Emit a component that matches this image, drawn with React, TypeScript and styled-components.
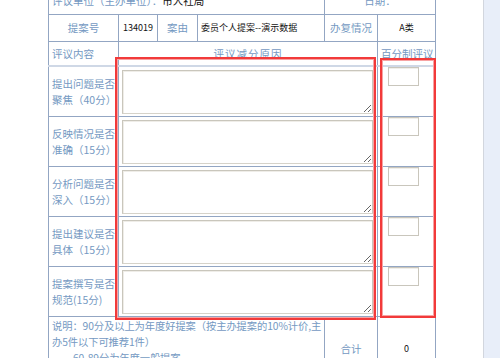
import React from 'react';
import styled, { createGlobalStyle } from 'styled-components';

const GlobalStyle = createGlobalStyle`
  html, body {
    margin: 0;
    padding: 0;
    background: #e8eef9;
  }
  body {
    font-family: "Noto Sans CJK SC", "Liberation Sans", sans-serif;
  }
`;

const Page = styled.div`
  position: relative;
  width: 483px;
  height: 358px;
  background: #ffffff;
  border-right: 1px solid #d2d6de;
  overflow: hidden;
`;

const Sheet = styled.table`
  margin: -13px 0 0 48px;
  width: 387px;
  table-layout: fixed;
  border-collapse: collapse;
  border-left: 1px solid #7088ab;
  border-right: 1px solid #7f95b6;
  font-size: 10.5px;
  color: #7499c2;
`;

type CellProps = {
  $align?: 'left' | 'center';
  $ink?: boolean;
  $h?: number;
  $rule?: boolean;
  $spread?: boolean;
};

const Cell = styled.td<CellProps>`
  border: 1px solid #93a6c3;
  border-bottom: ${({ $rule }) => ($rule ? '2px solid #cfd8e6' : '1px solid #93a6c3')};
  padding: ${({ $align }) => ($align === 'left' ? '0 3px' : '0')};
  text-align: ${({ $align }) => $align || 'center'};
  vertical-align: middle;
  height: ${({ $h }) => ($h ? `${$h}px` : 'auto')};
  color: ${({ $ink }) => ($ink ? '#111111' : '#7499c2')};
  font-size: ${({ $ink }) => ($ink ? '9px' : '10.5px')};
  letter-spacing: ${({ $spread }) => ($spread ? '1px' : 'normal')};
  line-height: 16px;
  white-space: nowrap;
  overflow: visible;
`;

const Black = styled.span`
  color: #111111;
`;

const Label = styled.td`
  border: 1px solid #93a6c3;
  padding: 0 3px;
  height: 49px;
  text-align: left;
  vertical-align: middle;
  line-height: 16px;
  color: #7499c2;
`;

const ReasonCell = styled.td`
  border: 1px solid #93a6c3;
  padding: 3px 3px 0 3px;
  vertical-align: top;
`;

const ScoreCell = styled.td`
  border: 1px solid #93a6c3;
  padding: 0 0 0 10px;
  vertical-align: top;
`;

const Reason = styled.textarea`
  display: block;
  box-sizing: border-box;
  width: 251px;
  height: 44px;
  margin: 0;
  border: 1px solid #c9c6bc;
  border-bottom-color: #d6d3ca;
  box-shadow: inset 1px 1px 0 #efede8;
  background: #ffffff;
  font-size: 11px;
  outline: none;
`;

const Score = styled.input`
  display: block;
  box-sizing: border-box;
  width: 31px;
  height: 19px;
  margin: 0;
  border: 1px solid #c9c6bc;
  box-shadow: inset 0 1px 0 #f1efea;
  background: #ffffff;
  outline: none;
`;

const Note = styled.td`
  border: 1px solid #93a6c3;
  padding: 1px 2px 0 3px;
  height: 62px;
  vertical-align: top;
  line-height: 16px;
  font-size: 10.3px;
  letter-spacing: -0.1px;
  color: #7499c2;
  white-space: normal;
  word-break: break-all;
`;

const NoteLine = styled.div<{ $indent?: boolean }>`
  padding-left: ${({ $indent }) => ($indent ? '21px' : '0')};
`;

const Highlight = styled.div<{ $x: number; $y: number; $w: number; $h: number }>`
  position: absolute;
  left: ${({ $x }) => $x}px;
  top: ${({ $y }) => $y}px;
  width: ${({ $w }) => $w}px;
  height: ${({ $h }) => $h}px;
  box-sizing: border-box;
  border: 2px solid #f23a3a;
  box-shadow: inset 0 0 0 1px #f7a3a3;
  pointer-events: none;
`;

const criteria = [
  ['提出问题是否', '聚焦（40分）'],
  ['反映情况是否', '准确（15分）'],
  ['分析问题是否', '深入（15分）'],
  ['提出建议是否', '具体（15分）'],
  ['提案撰写是否', '规范(15分)'],
];

export default function App() {
  return (
    <>
      <GlobalStyle />
      <Page>
        <Sheet>
          <colgroup>
            <col style={{ width: 70 }} />
            <col style={{ width: 39 }} />
            <col style={{ width: 40 }} />
            <col style={{ width: 127 }} />
            <col style={{ width: 53 }} />
            <col style={{ width: 58 }} />
          </colgroup>
          <tbody>
            <tr>
              <Cell colSpan={4} $align="left" $h={26}>
                评议单位（主办单位）：<Black>市人社局</Black>
              </Cell>
              <Cell colSpan={2} $h={26}>
                日期：
              </Cell>
            </tr>
            <tr>
              <Cell $h={26}>提案号</Cell>
              <Cell $ink>134019</Cell>
              <Cell>案由</Cell>
              <Cell $ink $align="left">
                委员个人提案--演示数据
              </Cell>
              <Cell>办复情况</Cell>
              <Cell $ink>A类</Cell>
            </tr>
            <tr>
              <Cell $align="left" $h={23} $rule>
                评议内容
              </Cell>
              <Cell colSpan={4} $rule $spread>
                评议减分原因
              </Cell>
              <Cell $rule $align="left">
                百分制评议
              </Cell>
            </tr>
            {criteria.map(([a, b]) => (
              <tr key={a}>
                <Label>
                  {a}
                  <br />
                  {b}
                </Label>
                <ReasonCell colSpan={4}>
                  <Reason />
                </ReasonCell>
                <ScoreCell>
                  <Score />
                </ScoreCell>
              </tr>
            ))}
            <tr>
              <Note colSpan={4}>
                <NoteLine>说明：90分及以上为年度好提案（按主办提案的10%计价,主办5件以下可推荐1件）</NoteLine>
                <NoteLine $indent>60-89分为年度一般提案</NoteLine>
              </Note>
              <Cell>合计</Cell>
              <Cell $ink>0</Cell>
            </tr>
          </tbody>
        </Sheet>
        <Highlight $x={115} $y={57} $w={261} $h={263} />
        <Highlight $x={380} $y={58} $w={56} $h={260} />
      </Page>
    </>
  );
}
